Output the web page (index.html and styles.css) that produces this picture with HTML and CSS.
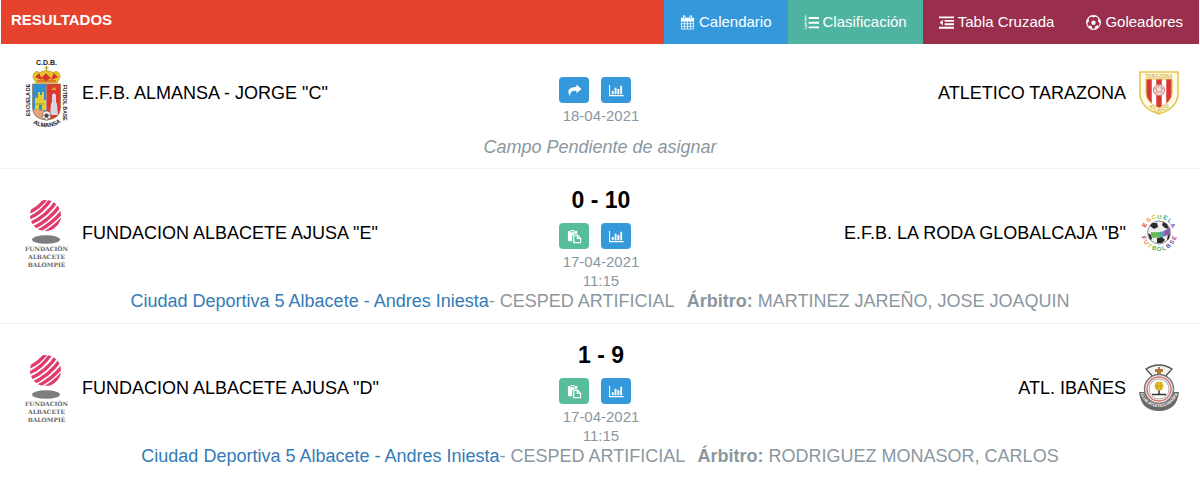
FILE: index.html
```
<!DOCTYPE html>
<html lang="es">

<head>
  <meta charset="UTF-8" />
  <meta name="viewport" content="width=device-width, initial-scale=1.0" />
  <title>Resultados</title>
  <link rel="stylesheet" href="styles.css">
</head>

<body>
  <!-- Iconos que se repiten -->
  <svg class="sprites" aria-hidden="true">
    <symbol id="ico-calendario" viewBox="0 0 16 16">
      <path d="M1.5 3.5h13v11.5h-13zM1.5 6.5h13M1.5 9.3h13M1.5 12.1h13M4.8 6.5V15M8 6.5V15M11.2 6.5V15" fill="none" stroke="currentColor" stroke-width="0.8" />
      <path d="M1 3h14v3.5H1z" fill="currentColor" />
      <path d="M4.5 1.500v3M11.5 1.500v3" stroke="currentColor" stroke-width="2.6" stroke-linecap="round" />
      <path d="M4.5 1.5v3M11.5 1.5v3" stroke="#3498db" stroke-width="0.8" />
    </symbol>
    <symbol id="ico-lista" viewBox="0 0 16 16">
      <path d="M5 2.2h11v2H5zM5 7.2h11v2H5zM5 12.2h11v2H5z" fill="currentColor" />
      <path d="M0.8 1.3l1-.6v4M0.6 4.7h2.4M0.8 6.6c1.8-1 2.6.6.8 1.9L.7 9.7h2.4M.7 11.5H3L1.9 12.8c1.7.3 1.1 2.4-1.3 1.8" fill="none" stroke="currentColor" stroke-width="0.9" />
    </symbol>
    <symbol id="ico-tabla" viewBox="0 0 16 16">
      <path d="M0 1.5h16v2H0zM6 5.2h10v2H6zM6 8.9h10v2H6zM0 12.6h16v2H0zM4 5v6.2L.8 8.1z" fill="currentColor" />
    </symbol>
    <symbol id="ico-balon" viewBox="0 0 16 16">
      <circle cx="8" cy="8" r="7.300" fill="none" stroke="currentColor" stroke-width="1.200" />
      <path d="M8 5.500l2.500 1.900-.9 2.900H6.400L5.500 7.400zM5 .9L8 2.600l3-1.700zM1 5.5L1.2 9 3.200 6.6l-.5-3zM15 5.5L14.8 9l-2-2.400.5-3zM3 13l.5-2.300 2.900 1.900.3 2.500zM13 13l-.5-2.300-2.900 1.900-.3 2.500z" fill="currentColor" />
    </symbol>
    <symbol id="ico-compartir" viewBox="0 0 16 16">
      <path d="M10 1.5l5.5 4.8L10 11V8.3C5.500 8 3 9.400 3.500 14 -.3 9.500 1 4.200 10 4.200z" fill="currentColor" />
    </symbol>
    <symbol id="ico-grafica" viewBox="0 0 16 16">
      <path d="M.6 2v11.500h15" fill="none" stroke="currentColor" stroke-width="1.200" />
      <path d="M3 8.500h2V12H3zM6 5h2v7H6zM9 6.500h2V12H9zM12 3h2v9h-2z" fill="currentColor" />
    </symbol>
    <symbol id="ico-acta" viewBox="0 0 16 16">
      <path d="M1 2h3V1h4v1h3v3H7.500L5.500 7v6H1z" fill="currentColor" />
      <path d="M3.500 3h5" stroke="#57bd9c" />
      <path d="M7.200 6.600h4L14.500 10v4.500H7.200zM11 6.600V10h3.500" fill="none" stroke="currentColor" stroke-width="1.300" />
    </symbol>
  </svg>

  <header class="cabecera">
    <h1 class="titulo">RESULTADOS</h1>
    <nav class="menu">
      <a class="azul" href="#"><svg class="icono"><use href="#ico-calendario" /></svg>Calendario</a>
      <a class="verde" href="#"><svg class="icono"><use href="#ico-lista" /></svg>Clasificación</a>
      <a class="granate" href="#"><svg class="icono"><use href="#ico-tabla" /></svg>Tabla Cruzada</a>
      <a class="granate" href="#"><svg class="icono"><use href="#ico-balon" /></svg>Goleadores</a>
    </nav>
  </header>

  <main>
    <article class="partido pendiente">
      <div class="fila">
        <div class="equipo">
          <svg class="escudo" viewBox="0 0 48 74" role="img" aria-label="Escudo Almansa">
            <defs>
              <path id="arco-almansa" d="M8 65Q24.500 78 42 64" />
              <clipPath id="blason"><path d="M10.500 28h28v23q0 12-14 13-14-1-14-13z" /></clipPath>
            </defs>
            <g class="letras">
              <text x="24.500" y="8.500" text-anchor="middle" class="letras-cdb">C.D.B.</text>
              <text transform="translate(8 60) rotate(-90)">ESCUELA DE</text>
              <text transform="translate(40.500 29) rotate(90)">FUTBOL BASE</text>
              <text class="letras-almansa"><textPath href="#arco-almansa" startOffset="50%" text-anchor="middle">ALMANSA</textPath></text>
            </g>
            <path d="M24.500 10v6M22.500 12h4" stroke="#a8a12c" stroke-width="1.200" />
            <path d="M14 27l-3-6c0-5 4-7 7-4 2-3 11-3 13 0 3-3 7-1 7 4l-3 6z" fill="#e6c52d" stroke="#b58e1c" stroke-width="0.700" />
            <path d="M14 21l3-3 2 5zM20 22l4-4 4 4-4 2zM35 21l-3-3-2 5zM15 25h19" fill="#d8342b" stroke="#d8342b" stroke-width="1.200" />
            <g clip-path="url(#blason)">
              <path d="M10 28h14.500v36H10z" fill="#2d8fd5" />
              <path d="M24.500 28H39v36H24.500z" fill="#dd3a2c" />
              <path d="M10 53l14 2v10H10z" fill="#e9a27c" />
              <path d="M13 53V42h3v-6h2v3h2v-3h2v8h2v10h-4v-5h-3v5z" fill="#e3cf31" />
              <path d="M13 40l2 2M20 32l2 3M13 48h9" stroke="#7b9d4b" />
              <path d="M28 59l1-11 1-2v-7l2-2 2 2v7l1 2 1 11z" fill="#dcd5e3" />
              <path d="M29 34l4-3 1 3z" fill="#edae35" />
            </g>
            <path d="M10.500 28h28v23q0 12-14 13-14-1-14-13z" fill="none" stroke="#8b6f54" stroke-width="0.700" />
            <circle cx="24.500" cy="59.500" r="4.500" fill="#f4f0ed" stroke="#706660" stroke-width="0.800" />
            <path d="M24.500 57.500l2 1.500-.8 2.300h-2.400L22.500 59zM20.500 59l2 0M26.500 59h2M23.300 61.500l-1 2M25.700 61.500l1 2" fill="#4d4340" stroke="#4d4340" stroke-width="0.600" />
          </svg>
          <span>E.F.B. ALMANSA - JORGE "C"</span>
        </div>
        <div class="centro">
          <div class="botones">
            <a class="boton azul" href="#" aria-label="Compartir"><svg class="icono"><use href="#ico-compartir" /></svg></a>
            <a class="boton azul" href="#" aria-label="Estadísticas"><svg class="icono"><use href="#ico-grafica" /></svg></a>
          </div>
          <div class="fecha">18-04-2021</div>
        </div>
        <div class="equipo visitante">
          <span>ATLETICO TARAZONA</span>
          <svg class="escudo" viewBox="0 0 42 44" role="img" aria-label="Escudo Tarazona">
            <defs>
              <clipPath id="barras"><path d="M8 8h26v14q0 9-13 15Q8 31 8 22z" /></clipPath>
              <path id="arco-tarazona" d="M4 24Q9 38 21 42 33 38 38 24" />
            </defs>
            <path d="M2 1h38v21q0 15-19 21Q2 37 2 22z" fill="#fffbe8" stroke="#e2c84f" stroke-width="1.600" />
            <g clip-path="url(#barras)">
              <path d="M8 7h26v32H8z" fill="#fff" />
              <path d="M11 7v32M21 7v32M31 7v32" stroke="#d93634" stroke-width="5.500" />
            </g>
            <path d="M8 8h26v14q0 9-13 15Q8 31 8 22z" fill="none" stroke="#dfb853" />
            <circle cx="21" cy="19" r="5.500" fill="#f4dedc" stroke="#cf7771" />
            <path d="M18 17l3-2 3 2-1 4h-4zM21 15v-2M16 18l2-1M26 18l-2-1M19 21l-2 2M23 21l2 2" fill="none" stroke="#cf7771" stroke-width="0.700" />
            <text x="21" y="6.500" text-anchor="middle" class="letras-oro">TARAZONA</text>
            <text class="letras-oro"><textPath href="#arco-tarazona" startOffset="50%" text-anchor="middle">ATLETICO</textPath></text>
          </svg>
        </div>
      </div>
      <p class="campo"><em>Campo Pendiente de asignar</em></p>
    </article>

    <article class="partido">
      <div class="fila">
        <div class="equipo">
          <svg class="escudo" viewBox="0 0 48 74" role="img" aria-label="Escudo Fundación Albacete">
            <clipPath id="bola"><circle cx="23.500" cy="19.500" r="15.500" /></clipPath>
            <g id="escudo-albacete">
              <g clip-path="url(#bola)" fill="none" stroke="#df3b6c" stroke-width="3.400">
                <path d="M5 17Q17 13 26 0M5 23Q21 17 31 0M5 29Q25 21 36 3M7 34Q28 25 39 8M12 37Q31 28 42 13M19 39Q34 31 43 19" />
              </g>
              <ellipse cx="24" cy="43.500" rx="14" ry="4.300" fill="#7d7d7d" />
              <g class="letras-serif" text-anchor="middle">
                <text x="24.500" y="54.500">FUNDACIÓN</text>
                <text x="24.500" y="62.500">ALBACETE</text>
                <text x="24.500" y="70.500">BALOMPIÉ</text>
              </g>
            </g>
          </svg>
          <span>FUNDACION ALBACETE AJUSA "E"</span>
        </div>
        <div class="centro">
          <strong class="marcador">0 - 10</strong>
          <div class="botones">
            <a class="boton acta" href="#" aria-label="Acta"><svg class="icono"><use href="#ico-acta" /></svg></a>
            <a class="boton azul" href="#" aria-label="Estadísticas"><svg class="icono"><use href="#ico-grafica" /></svg></a>
          </div>
          <div class="fecha">17-04-2021</div>
          <div class="fecha">11:15</div>
        </div>
        <div class="equipo visitante">
          <span>E.F.B. LA RODA GLOBALCAJA "B"</span>
          <svg class="escudo" viewBox="0 0 42 42" role="img" aria-label="Escudo La Roda">
            <circle cx="21" cy="20.500" r="11.500" fill="#eeeeed" stroke="#777" stroke-width="0.800" />
            <path d="M14 11l5 0 1 4-4 2-4-3zM25 10l4 2 2 5-4-1-3-3zM10 21l3 2 1 4-2 1zM19 26l5-1 3 3-3 3-5 0zM30 22l2-1-1 6-2 1z" fill="#292c2a" />
            <path d="M13 20q8 2 19-4v6q-9 5-19 3z" fill="#53a7bd" />
            <path d="M13 20q5 1 8 0v5q-4 1-8 0z" fill="#69b953" />
            <path d="M26 19l6-3v6l-6 2z" fill="#9a58ad" />
            <!-- anillo de letras de colores -->
            <g class="letras-roda" text-anchor="middle">
              <text fill="#d9402d" transform="translate(8.500 14) rotate(-62)">E</text>
              <text fill="#e98a28" transform="translate(12 9.500) rotate(-42)">S</text>
              <text fill="#d7bd28" transform="translate(16.500 7) rotate(-20)">C</text>
              <text fill="#63b345" transform="translate(21.500 6.500)">U</text>
              <text fill="#35a88a" transform="translate(26.500 7.500) rotate(22)">E</text>
              <text fill="#397fc0" transform="translate(30.500 10.500) rotate(42)">L</text>
              <text fill="#7e4ca0" transform="translate(33 14.500) rotate(62)">A</text>
              <text fill="#d9402d" transform="translate(4 26.500) rotate(72)">F</text>
              <text fill="#e98a28" transform="translate(6.500 31.500) rotate(54)">U</text>
              <text fill="#d7bd28" transform="translate(10.500 35.500) rotate(36)">T</text>
              <text fill="#63b345" transform="translate(15.500 38) rotate(18)">B</text>
              <text fill="#4fae45" transform="translate(21 39)">O</text>
              <text fill="#35a88a" transform="translate(26.500 38) rotate(-18)">L</text>
              <text fill="#574aa0" transform="translate(31.500 35.500) rotate(-36)">B</text>
              <text fill="#87479f" transform="translate(35.500 31.500) rotate(-54)">S</text>
              <text fill="#b24284" transform="translate(38 26.500) rotate(-72)">E</text>
            </g>
          </svg>
        </div>
      </div>
      <p class="campo"><a href="#">Ciudad Deportiva 5 Albacete - Andres Iniesta</a>- CESPED ARTIFICIAL <span class="arbitro"><b>Árbitro:</b> MARTINEZ JAREÑO, JOSE JOAQUIN</span></p>
    </article>

    <article class="partido">
      <div class="fila">
        <div class="equipo">
          <svg class="escudo" viewBox="0 0 48 74" role="img" aria-label="Escudo Fundación Albacete"><use href="#escudo-albacete" /></svg>
          <span>FUNDACION ALBACETE AJUSA "D"</span>
        </div>
        <div class="centro">
          <strong class="marcador">1 - 9</strong>
          <div class="botones">
            <a class="boton acta" href="#" aria-label="Acta"><svg class="icono"><use href="#ico-acta" /></svg></a>
            <a class="boton azul" href="#" aria-label="Estadísticas"><svg class="icono"><use href="#ico-grafica" /></svg></a>
          </div>
          <div class="fecha">17-04-2021</div>
          <div class="fecha">11:15</div>
        </div>
        <div class="equipo visitante">
          <span>ATL. IBAÑES</span>
          <svg class="escudo" viewBox="0 0 42 48" role="img" aria-label="Escudo Ibañes">
            <defs><path id="arco-ibanes" d="M3 31A19.500 19.500 0 0 0 39 31" /></defs>
            <path d="M8 5Q21-3 34 5L25 15h-8z" fill="#f4f4f1" stroke="#555" stroke-width="1.400" />
            <path d="M17 5h3V3h2v2h3v3h-2v3h3v2H16v-2h3V8h-2z" fill="#b07b32" />
            <path d="M1 28h8q2 12 12 12t12-12h8q-2 19-20 19T1 28z" fill="#6b6968" />
            <circle cx="21" cy="25" r="14.500" fill="#f3f2ef" stroke="#777" stroke-width="1.500" />
            <circle cx="21" cy="25" r="12" fill="none" stroke="#d4787a" stroke-width="1.500" />
            <circle cx="21" cy="25" r="10" fill="#fff" stroke="#999" stroke-width="0.800" />
            <path d="M14 30.500h14M21 26v5" fill="none" stroke="#333" stroke-width="1.500" />
            <circle cx="21" cy="22" r="4.500" fill="#e5be2d" />
            <path d="M19 18v8M23 18v8M17 22h8" stroke="#bd9622" stroke-width="0.700" />
            <text class="letras-ibanes"><textPath href="#arco-ibanes" startOffset="50%" text-anchor="middle">CLUB ATLETICO IBAÑES</textPath></text>
          </svg>
        </div>
      </div>
      <p class="campo"><a href="#">Ciudad Deportiva 5 Albacete - Andres Iniesta</a>- CESPED ARTIFICIAL <span class="arbitro"><b>Árbitro:</b> RODRIGUEZ MONASOR, CARLOS</span></p>
    </article>
  </main>
</body>

</html>
```
FILE: styles.css
```
* {
  box-sizing: border-box;
}

body {
  margin: 0;
  font-family: "Liberation Sans", Arial, sans-serif;
  font-size: 18px;
  line-height: 22px;
  color: #000;
  background-color: #fff;
}

a {
  color: #337ab7;
  text-decoration: none;
}

.sprites {
  position: absolute;
  width: 0;
  height: 0;
}

.icono {
  width: 15px;
  height: 15px;
  flex: none;
}

/* Colores */
.azul {
  background-color: #3498db;
}

.verde {
  background-color: #4fb3a1;
}

.granate {
  background-color: #992e4d;
}

.acta {
  background-color: #57bd9c;
}

/* Cabecera */
.cabecera {
  display: flex;
  justify-content: space-between;
  margin: 0 1px;
  background-color: #e6432f;
}

.titulo {
  margin: 0;
  padding: 9px 10px;
  font-size: 15px;
  line-height: 22px;
  color: #fff;
}

.menu {
  display: flex;
}

.menu a {
  display: flex;
  align-items: center;
  gap: 4px;
  height: 44px;
  padding: 0 16px;
  font-size: 15px;
  color: #fff;
}

/* Partidos */
.partido {
  padding: 12px 0 11px;
  border-bottom: 1px solid #f3f3f3;
}

.partido:last-child {
  border-bottom: none;
}

.fila {
  display: grid;
  grid-template-columns: 1fr auto 1fr;
  align-items: start;
  padding: 0 20px 0 22px;
}

.equipo {
  display: flex;
  align-items: center;
  gap: 12px;
  height: 74px;
  margin-top: 15px;
}

.visitante {
  justify-content: flex-end;
}

.escudo {
  width: 48px;
  height: 74px;
  flex: none;
}

.visitante .escudo {
  width: 42px;
  height: 48px;
}

.centro {
  text-align: center;
}

.marcador {
  display: block;
  margin-bottom: 4px;
  font-size: 23px;
  line-height: 38px;
}

.botones {
  display: flex;
  justify-content: center;
  gap: 12px;
  padding-right: 12px;
  margin-bottom: 3px;
}

.boton {
  display: flex;
  align-items: center;
  justify-content: center;
  width: 30px;
  height: 26px;
  border-radius: 4px;
  color: #fff;
}

.fecha {
  font-size: 15px;
  line-height: 19px;
  color: #8a979f;
}

.campo {
  margin: 0;
  text-align: center;
  color: #8a979f;
}

.arbitro {
  margin-left: 8px;
}

.pendiente {
  padding-bottom: 10px;
}

.pendiente .equipo {
  margin-top: 0;
}

.pendiente .centro {
  padding-top: 21px;
}

.pendiente .campo {
  margin-top: 6px;
}

/* Letras de los escudos */
.letras {
  font-size: 5px;
  font-weight: bold;
  fill: #222;
}

.letras-cdb {
  font-size: 7px;
}

.letras-almansa {
  font-size: 6px;
}

.letras-serif {
  font-family: "DejaVu Serif", serif;
  font-size: 6px;
  font-weight: bold;
  fill: #666;
}

.letras-oro {
  font-size: 5px;
  font-weight: bold;
  fill: #d9b640;
}

.letras-roda {
  font-size: 6px;
  font-weight: bold;
}

.letras-ibanes {
  font-size: 4px;
  font-weight: bold;
  fill: #fff;
}
```
